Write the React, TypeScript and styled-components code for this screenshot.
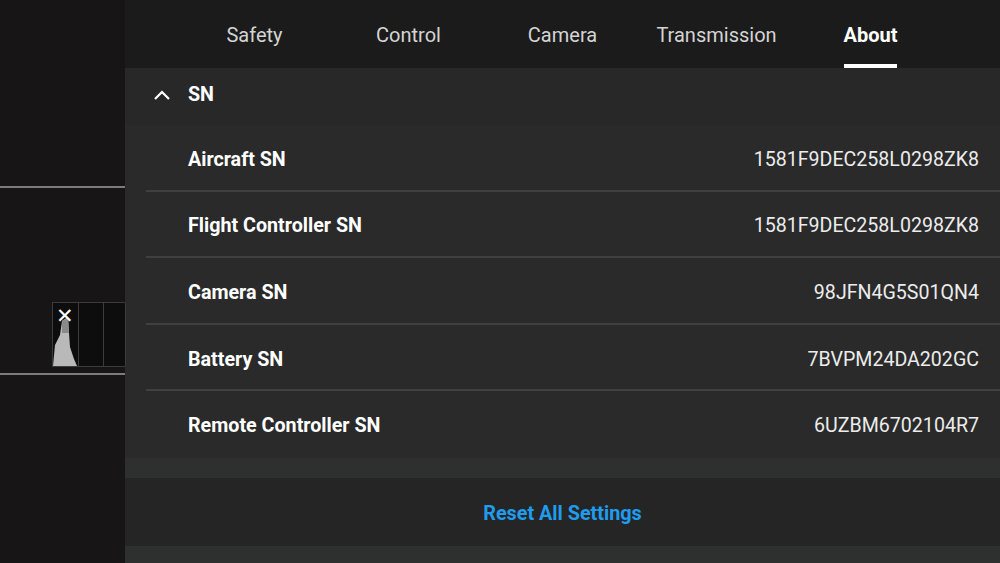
import React from "react";
import styled, { createGlobalStyle } from "styled-components";

const GlobalStyle = createGlobalStyle`
    html, body {
        margin: 0;
        padding: 0;
        background: #131313;
        font-family: Roboto, "Liberation Sans", sans-serif;
    }
`;

const Screen = styled.div`
    display: flex;
    width: 1000px;
    height: 563px;
    overflow: hidden;
    background: #151414;
`;

const CameraView = styled.div`
    position: relative;
    width: 125px;
    flex-shrink: 0;
    background: #171515;
`;

const GuideLine = styled.div<{ top: number }>`
    position: absolute;
    left: 0;
    right: 0;
    top: ${(p) => p.top}px;
    height: 2px;
    background: #7c7c7c;
`;

const Histogram = styled.div`
    position: absolute;
    left: 52px;
    top: 302px;
    width: 73px;
    height: 65px;
    display: grid;
    grid-template-columns: 26px 25px 22px;
    border: 1px solid #3c3c3c;
    border-right: none;
    background: #0d0d0d;
    box-sizing: border-box;
`;

const HistCell = styled.div`
    position: relative;
    border-right: 1px solid #3c3c3c;
`;

const CloseMark = styled.div`
    position: absolute;
    left: 3px;
    top: 3px;
    color: #ffffff;
    font-size: 21px;
    line-height: 1;
`;

const Panel = styled.div`
    flex: 1;
    display: flex;
    flex-direction: column;
    background: #2e2f2f;
`;

const TabBar = styled.div`
    height: 68px;
    display: flex;
    justify-content: center;
    background: #1b1b1b;
`;

const Tab = styled.div`
    width: 154px;
    display: flex;
    justify-content: center;
`;

const TabLabel = styled.div<{ active?: boolean }>`
    height: 68px;
    box-sizing: border-box;
    padding-top: 23px;
    font-size: 20px;
    color: ${(p) => (p.active ? "#ffffff" : "#d4d4d4")};
    font-weight: ${(p) => (p.active ? 700 : 400)};
    border-bottom: 4px solid ${(p) => (p.active ? "#ffffff" : "transparent")};
`;

const SectionHeader = styled.div`
    height: 57px;
    box-sizing: border-box;
    padding: 0 0 4px 28px;
    display: flex;
    align-items: center;
    gap: 17px;
    background: #282828;
    color: #ffffff;
    font-size: 19.7px;
    font-weight: 700;
`;

const List = styled.div`
    background: #2a2a2a;
`;

const Row = styled.div<{ last?: boolean }>`
    height: 66.6px;
    box-sizing: border-box;
    margin-left: 21px;
    padding: 4px 21px 0 42px;
    display: flex;
    align-items: center;
    justify-content: space-between;
    border-bottom: 2px solid ${(p) => (p.last ? "transparent" : "#404040")};
`;

const RowLabel = styled.span`
    color: #ffffff;
    font-size: 19.7px;
    font-weight: 700;
`;

const RowValue = styled.span`
    color: #ececec;
    font-size: 19.6px;
`;

const Spacer = styled.div`
    height: 20px;
    background: #2e2f2f;
`;

const ResetRow = styled.div`
    height: 68px;
    box-sizing: border-box;
    padding-top: 3px;
    display: flex;
    align-items: center;
    justify-content: center;
    background: #252525;
    color: #209cee;
    font-size: 19.8px;
    font-weight: 700;
`;

const tabs = ["Safety", "Control", "Camera", "Transmission", "About"];

const serials = [
    { label: "Aircraft SN", value: "1581F9DEC258L0298ZK8" },
    { label: "Flight Controller SN", value: "1581F9DEC258L0298ZK8" },
    { label: "Camera SN", value: "98JFN4G5S01QN4" },
    { label: "Battery SN", value: "7BVPM24DA202GC" },
    { label: "Remote Controller SN", value: "6UZBM6702104R7" },
];

const App = () => {
    return (
        <>
            <GlobalStyle />
            <Screen>
                <CameraView>
                    <GuideLine top={186} />
                    <GuideLine top={373} />
                    <Histogram>
                        <HistCell>
                            <svg width="26" height="63" viewBox="0 0 26 63" style={{ position: "absolute", left: 0, top: 0 }}>
                                <polygon points="0,63 2,42 7,32 9,18 15,14 16,30 17,44 21,56 24,63" fill="#b9b9b9" />
                                <polygon points="9,18 15,14 16,30 9,30" fill="#8a8a8a" />
                            </svg>
                            <CloseMark>✕</CloseMark>
                        </HistCell>
                        <HistCell />
                        <HistCell />
                    </Histogram>
                </CameraView>
                <Panel>
                    <TabBar>
                        {tabs.map((t) => (
                            <Tab key={t}>
                                <TabLabel active={t === "About"}>{t}</TabLabel>
                            </Tab>
                        ))}
                    </TabBar>
                    <SectionHeader>
                        <svg width="18" height="12" viewBox="0 0 18 12">
                            <polyline points="2,10 9,3 16,10" fill="none" stroke="#ffffff" strokeWidth="2.2" />
                        </svg>
                        SN
                    </SectionHeader>
                    <List>
                        {serials.map((s, i) => (
                            <Row key={s.label} last={i === serials.length - 1}>
                                <RowLabel>{s.label}</RowLabel>
                                <RowValue>{s.value}</RowValue>
                            </Row>
                        ))}
                    </List>
                    <Spacer />
                    <ResetRow>Reset All Settings</ResetRow>
                </Panel>
            </Screen>
        </>
    );
};

export default App;
